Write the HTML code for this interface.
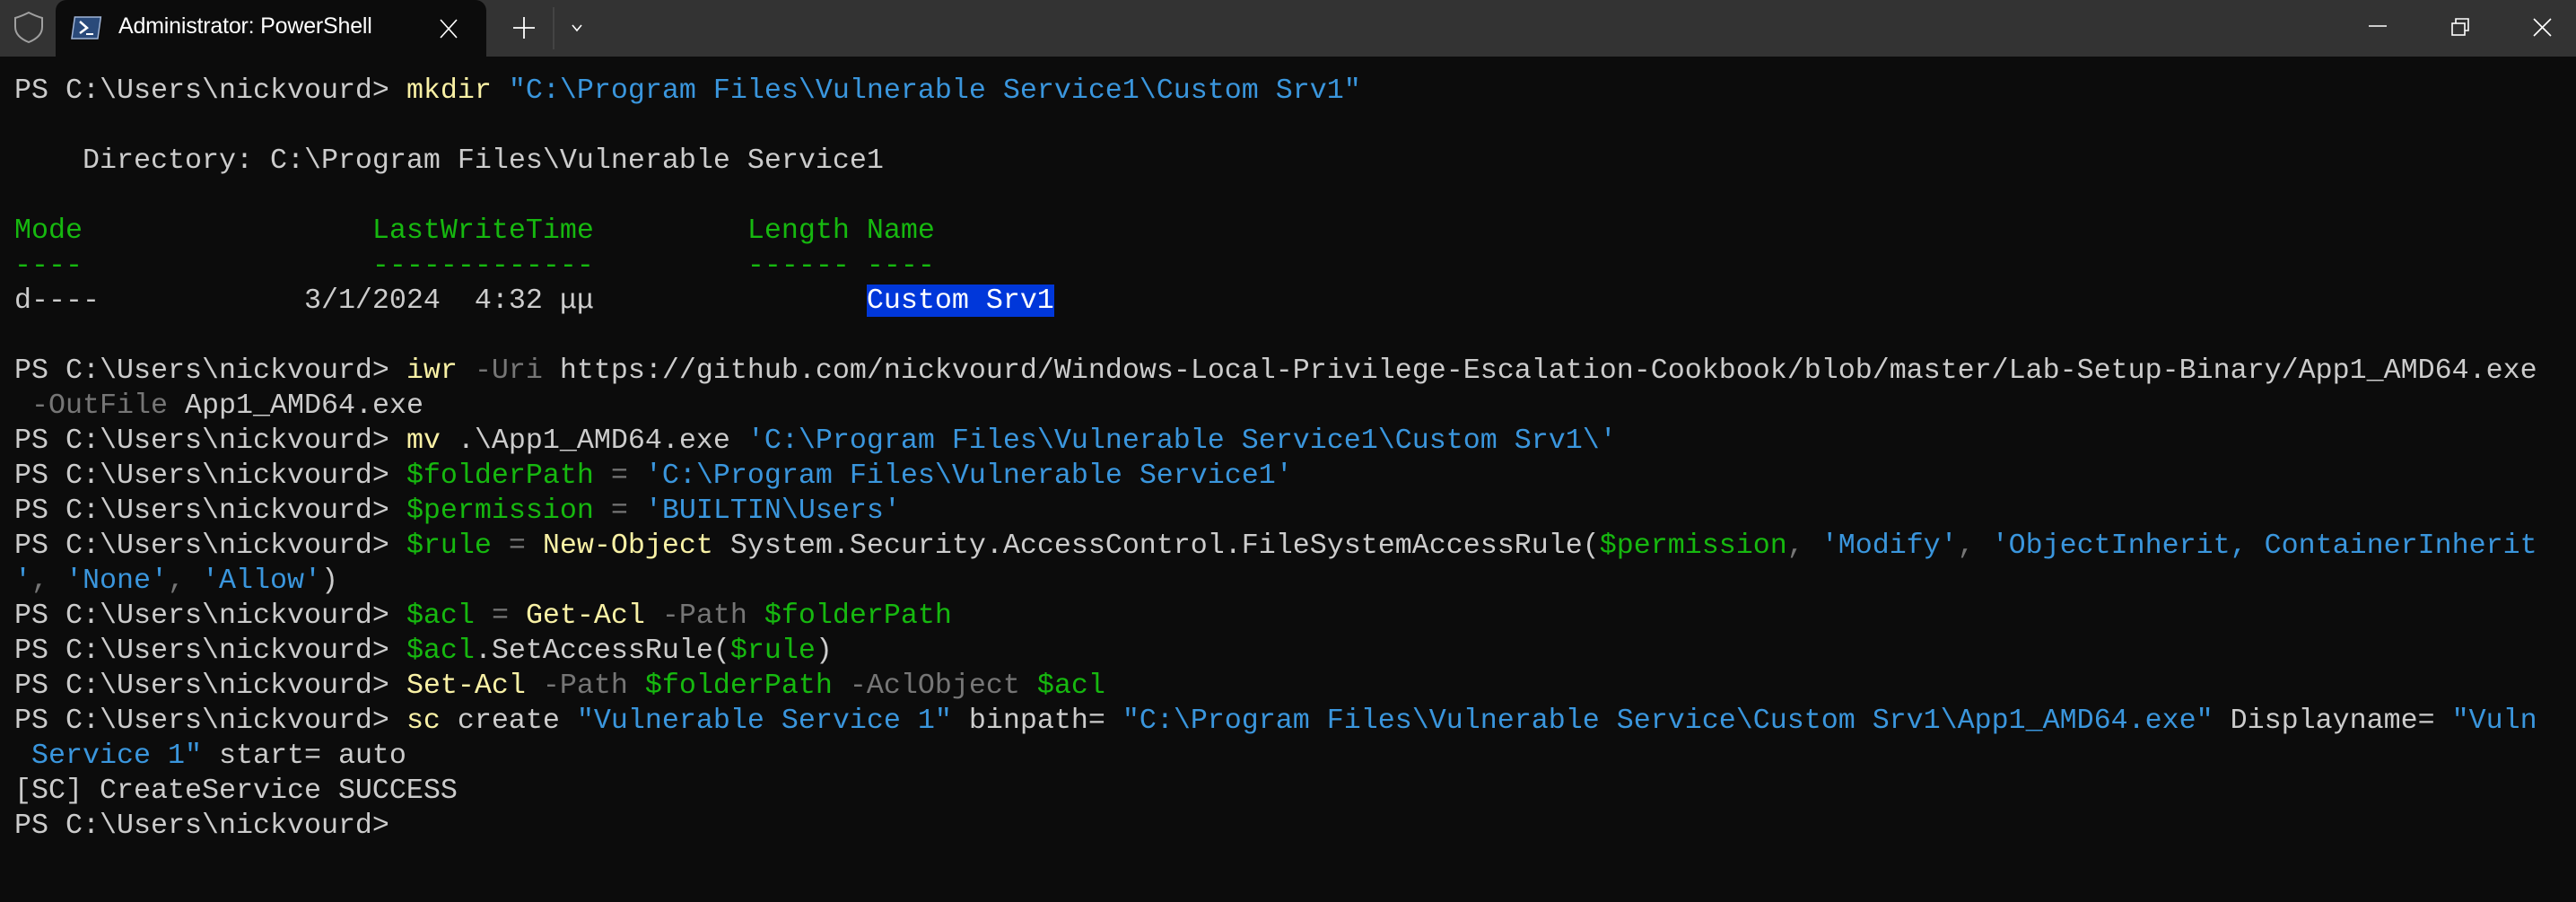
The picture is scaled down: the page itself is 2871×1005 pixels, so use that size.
<!DOCTYPE html>
<html><head><meta charset="utf-8"><style>
html,body{margin:0;padding:0;background:#0c0c0c;width:2871px;height:1005px;overflow:hidden}
.bar{position:absolute;left:0;top:0;width:2871px;height:63px;background:#333333}
.tab{position:absolute;left:62px;top:0;width:480px;height:63px;background:#0c0c0c;border-radius:12px 12px 0 0}
.title{position:absolute;left:132px;top:15px;font:25px "Liberation Sans",sans-serif;color:#fff;letter-spacing:-0.2px}
.term{position:absolute;left:16px;top:82px;font-family:"Liberation Mono",monospace;font-size:31.67px;line-height:39px;white-space:pre;color:#cccccc}
.y{color:#f9f1a5}.b{color:#3a96dd}.g{color:#16b80f}.d{color:#767676}
.hl{background:#0037da;color:#fff}
</style></head><body>
<div class="bar"></div>
<div class="tab"></div>
<svg style="position:absolute;left:0;top:0" width="2871" height="63">
<path d="M17 20 Q24 18 32 14 Q40 18 47 20 L47 30 Q47 41 32 47 Q17 41 17 30 Z" fill="none" stroke="#a0a0a0" stroke-width="2"/>
<rect x="82" y="19" width="29" height="24" fill="#2a4a7a" stroke="#9fb4d6" stroke-width="1.5" transform="skewX(-8) translate(4,0)"/>
<path d="M89 24 L97 31 L89 37" fill="none" stroke="#fff" stroke-width="2.5"/>
<path d="M96 38 L104 38" stroke="#fff" stroke-width="2"/>
<path d="M491 22 L509 42 M509 22 L491 42" stroke="#fff" stroke-width="1.6"/>
<path d="M584 19 L584 43 M572 31 L596 31" stroke="#fff" stroke-width="1.8"/>
<path d="M617 8 L617 55" stroke="#555" stroke-width="1"/>
<path d="M638 28 L643 34 L648 28" fill="none" stroke="#fff" stroke-width="1.6"/>
<path d="M2640 29 L2660 29" stroke="#fff" stroke-width="1.6"/>
<rect x="2733" y="26" width="14" height="13" fill="none" stroke="#fff" stroke-width="1.6"/>
<path d="M2737 26 L2737 21 L2751 21 L2751 34 L2747 34" fill="none" stroke="#fff" stroke-width="1.6"/>
<path d="M2824 21 L2843 40 M2843 21 L2824 40" stroke="#fff" stroke-width="1.6"/>
</svg>
<div class="title">Administrator: PowerShell</div>
<div class="term">PS C:\Users\nickvourd&gt; <span class="y">mkdir</span> <span class="b">"C:\Program Files\Vulnerable Service1\Custom Srv1"</span>

    Directory: C:\Program Files\Vulnerable Service1

<span class="g">Mode                 LastWriteTime         Length Name</span>
<span class="g">----                 -------------         ------ ----</span>
d----            3/1/2024  4:32 μμ                <span class="hl">Custom Srv1</span>

PS C:\Users\nickvourd&gt; <span class="y">iwr</span> <span class="d">-Uri</span> https://github.com/nickvourd/Windows-Local-Privilege-Escalation-Cookbook/blob/master/Lab-Setup-Binary/App1_AMD64.exe
<span class="d"> -OutFile</span> App1_AMD64.exe
PS C:\Users\nickvourd&gt; <span class="y">mv</span> .\App1_AMD64.exe <span class="b">'C:\Program Files\Vulnerable Service1\Custom Srv1\'</span>
PS C:\Users\nickvourd&gt; <span class="g">$folderPath</span> <span class="d">=</span> <span class="b">'C:\Program Files\Vulnerable Service1'</span>
PS C:\Users\nickvourd&gt; <span class="g">$permission</span> <span class="d">=</span> <span class="b">'BUILTIN\Users'</span>
PS C:\Users\nickvourd&gt; <span class="g">$rule</span> <span class="d">=</span> <span class="y">New-Object</span> System.Security.AccessControl.FileSystemAccessRule(<span class="g">$permission</span><span class="d">,</span> <span class="b">'Modify'</span><span class="d">,</span> <span class="b">'ObjectInherit, ContainerInherit</span>
<span class="b">'</span><span class="d">,</span> <span class="b">'None'</span><span class="d">,</span> <span class="b">'Allow'</span>)
PS C:\Users\nickvourd&gt; <span class="g">$acl</span> <span class="d">=</span> <span class="y">Get-Acl</span> <span class="d">-Path</span> <span class="g">$folderPath</span>
PS C:\Users\nickvourd&gt; <span class="g">$acl</span>.SetAccessRule(<span class="g">$rule</span>)
PS C:\Users\nickvourd&gt; <span class="y">Set-Acl</span> <span class="d">-Path</span> <span class="g">$folderPath</span> <span class="d">-AclObject</span> <span class="g">$acl</span>
PS C:\Users\nickvourd&gt; <span class="y">sc</span> create <span class="b">"Vulnerable Service 1"</span> binpath= <span class="b">"C:\Program Files\Vulnerable Service\Custom Srv1\App1_AMD64.exe"</span> Displayname= <span class="b">"Vuln</span>
<span class="b"> Service 1"</span> start= auto
[SC] CreateService SUCCESS
PS C:\Users\nickvourd&gt;</div>
</body></html>
